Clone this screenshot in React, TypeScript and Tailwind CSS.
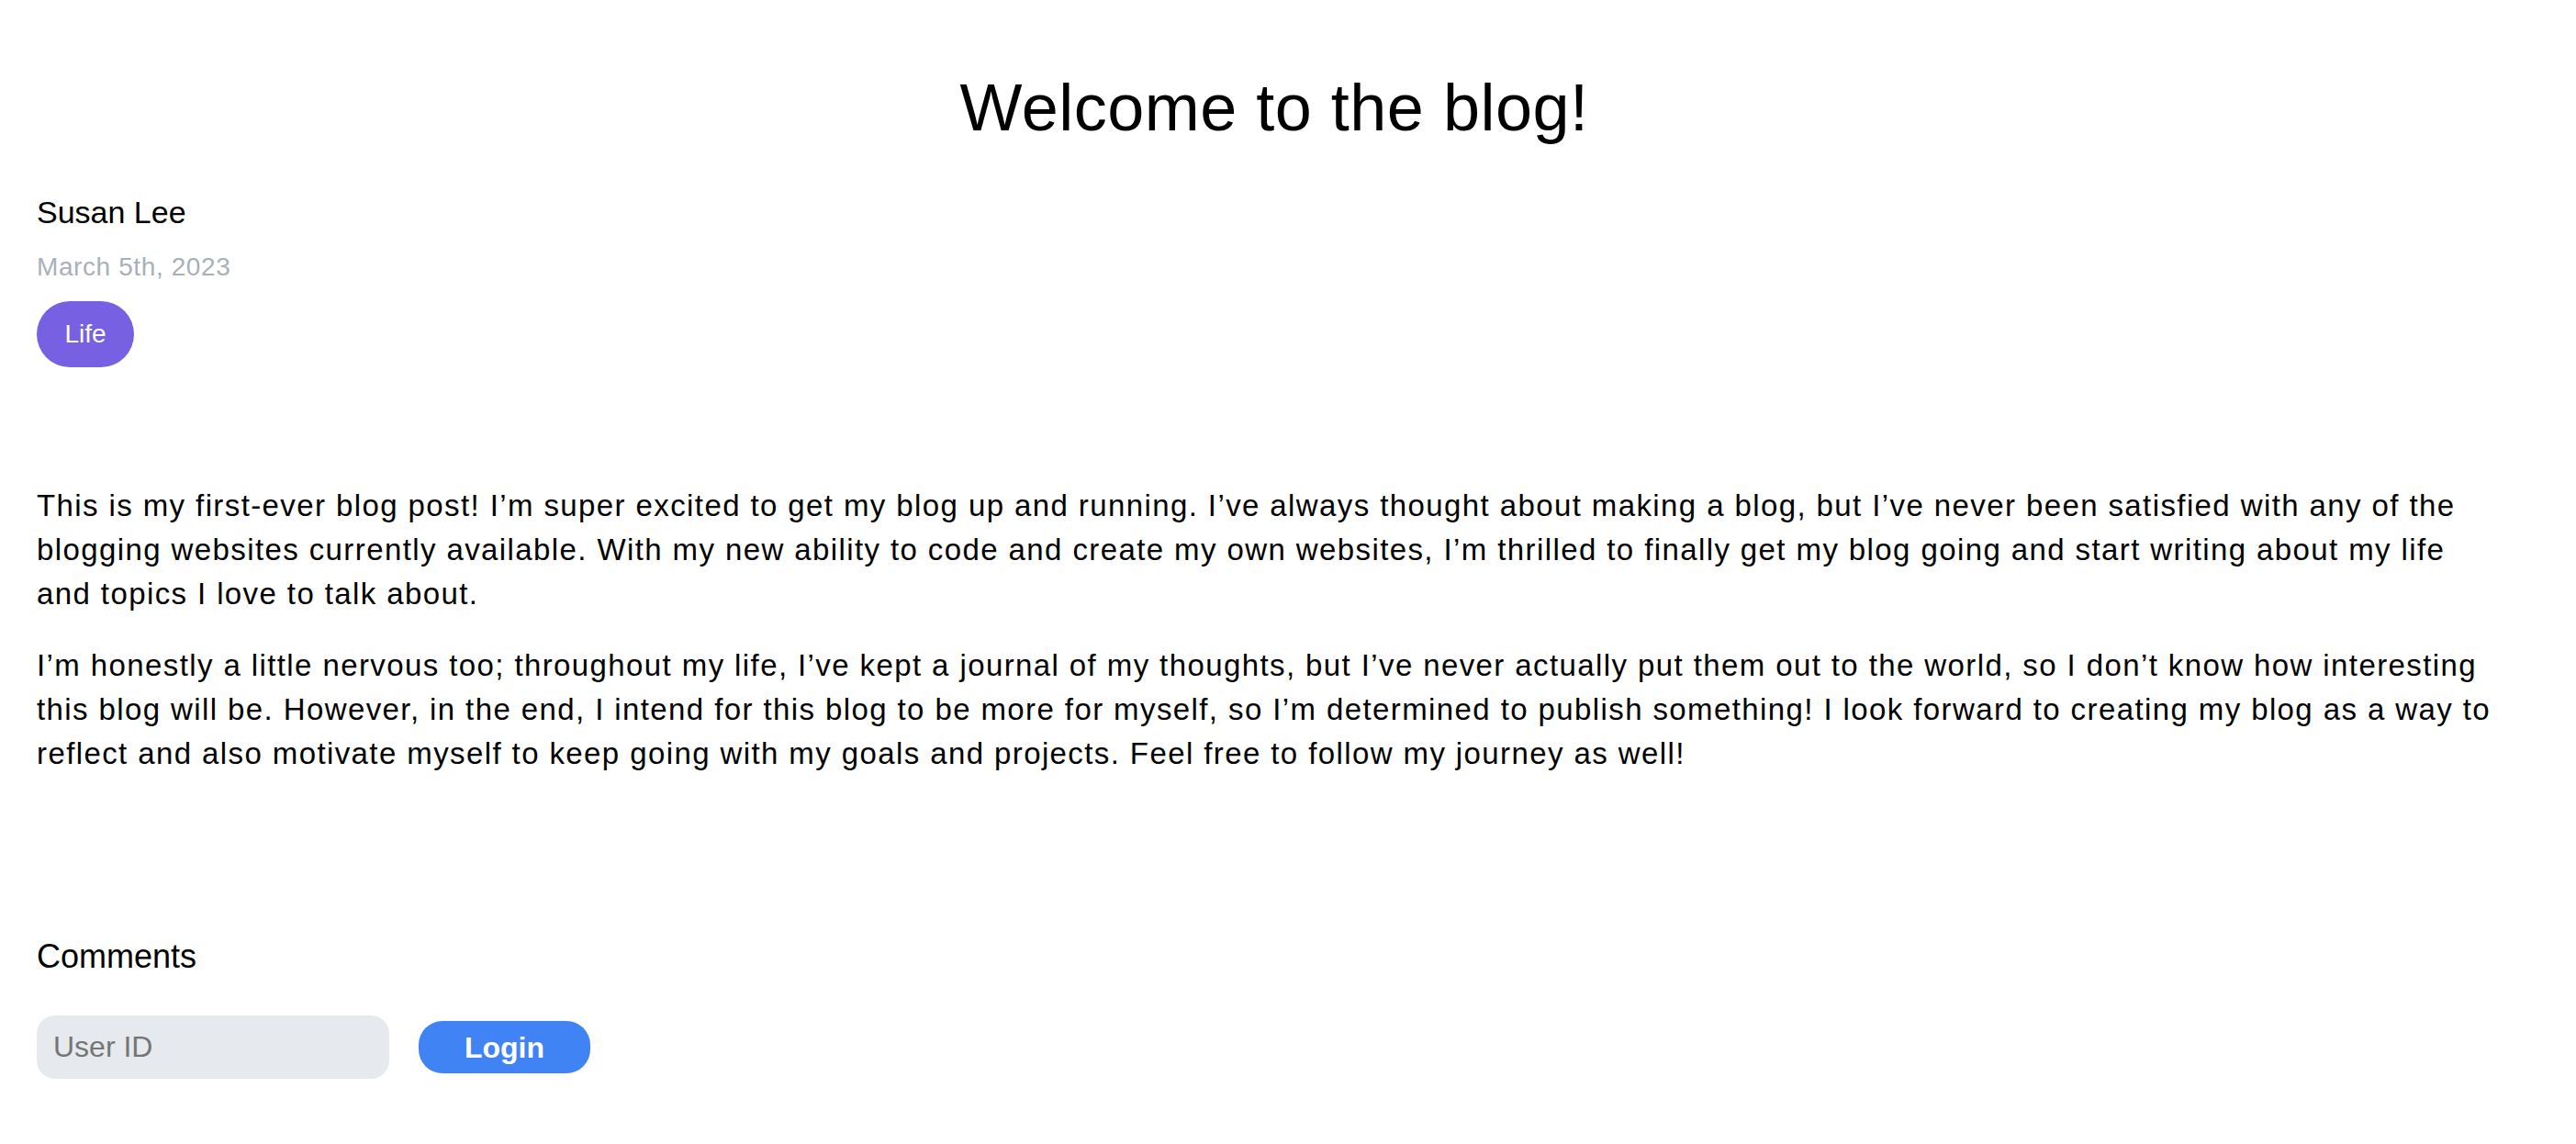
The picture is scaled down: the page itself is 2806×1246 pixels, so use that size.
import React from 'react';

const paragraphs: string[] = [
  "This is my first-ever blog post! I’m super excited to get my blog up and running. I’ve always thought about making a blog, but I’ve never been satisfied with any of the blogging websites currently available. With my new ability to code and create my own websites, I’m thrilled to finally get my blog going and start writing about my life and topics I love to talk about.",
  "I’m honestly a little nervous too; throughout my life, I’ve kept a journal of my thoughts, but I’ve never actually put them out to the world, so I don’t know how interesting this blog will be. However, in the end, I intend for this blog to be more for myself, so I’m determined to publish something! I look forward to creating my blog as a way to reflect and also motivate myself to keep going with my goals and projects. Feel free to follow my journey as well!",
];

const App: React.FC = () => {
  return (
    <div className="min-h-screen bg-white px-[40px] pt-[77px] pb-[60px] font-['Liberation_Sans',Arial,sans-serif] text-black">
      <h1 className="pr-[30px] text-center text-[72px] leading-[80px] tracking-[0.5px]">Welcome to the blog!</h1>

      {/* author + meta */}
      <div className="mt-[46px] flex flex-col items-start">
        <p className="text-[34px] leading-[56px]">Susan Lee</p>
        <p className="mt-[12px] text-[28px] leading-[40px] tracking-[0.6px] text-[#a9b0b9]">March 5th, 2023</p>
        <span className="mt-[17px] w-[106px] rounded-full bg-[#7761e2] py-[16px] text-center text-[28px] leading-[40px] text-white">
          Life
        </span>
      </div>

      <article className="mt-[127px] flex flex-col gap-[30px] pr-[36px] text-[33px] leading-[48px] tracking-[1.4px]">
        {paragraphs.map((text, i) => (
          <p key={i}>{text}</p>
        ))}
      </article>

      <section className="mt-[170px]">
        <h2 className="text-[36px] leading-[54px]">Comments</h2>
        <div className="mt-[37px] flex items-center gap-[32px]">
          <input
            type="text"
            placeholder="User ID"
            className="h-[69px] w-[384px] rounded-[20px] bg-[#e6eaee] px-[18px] text-[32px] text-black outline-none placeholder:text-[#757575]"
          />
          <button className="h-[57px] w-[187px] rounded-[26px] bg-[#4083f5] text-[32px] font-bold text-white">
            Login
          </button>
        </div>
      </section>
    </div>
  );
};

export default App;
